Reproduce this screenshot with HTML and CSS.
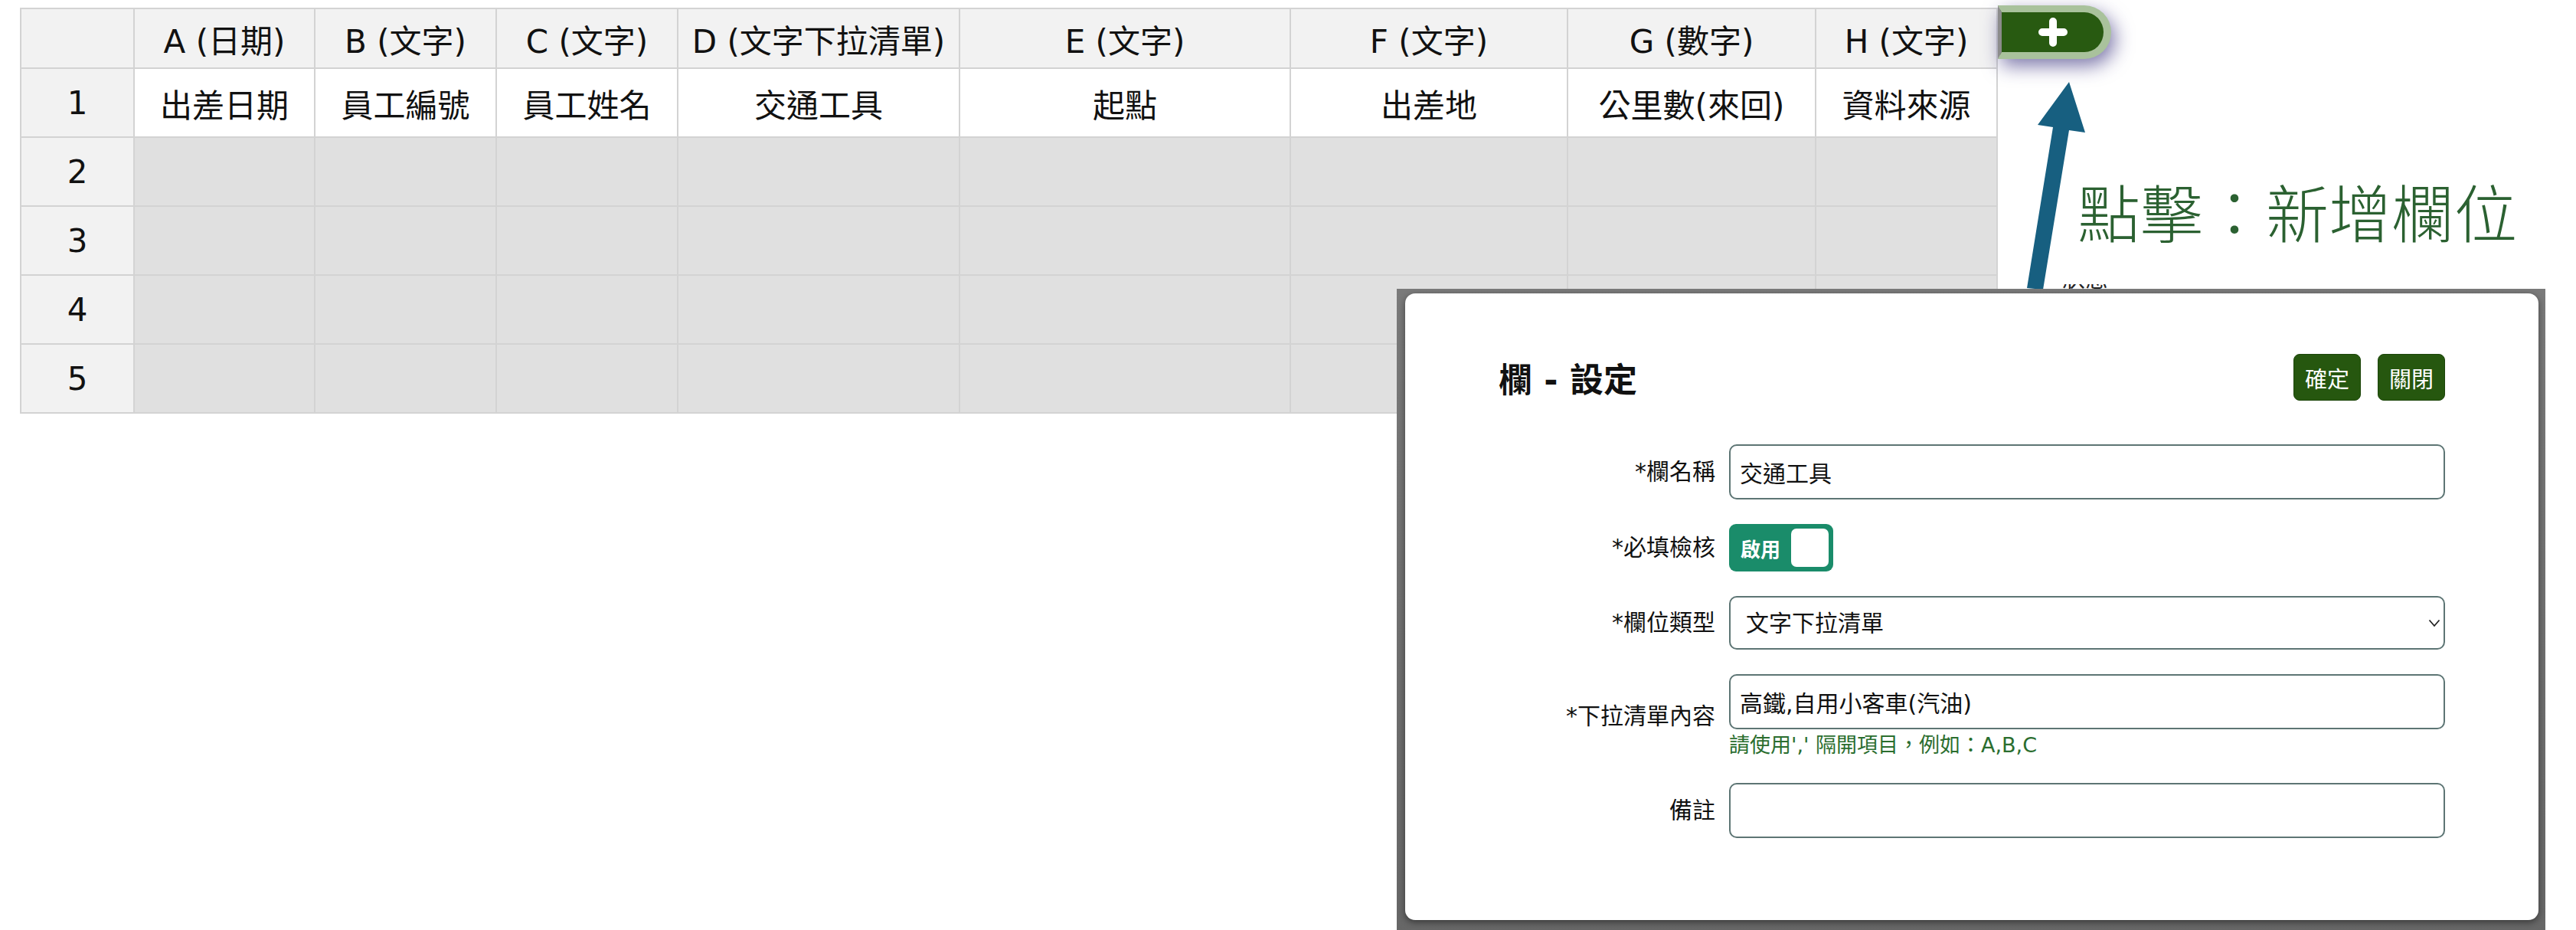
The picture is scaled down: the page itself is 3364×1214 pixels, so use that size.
FILE: index.html
```html
<!DOCTYPE html>
<html lang="zh-Hant">
<head>
  <meta charset="UTF-8" />
  <meta name="viewport" content="width=device-width, initial-scale=1.0"/>
  <title>欄位設定</title>
  <link rel="stylesheet" href="styles.css">
</head>
<body>
  <div class="sheet-area">
    <table class="sheet">
      <colgroup>
        <col style="width:148px">
        <col style="width:236px">
        <col style="width:237px">
        <col style="width:237px">
        <col style="width:368px">
        <col style="width:432px">
        <col style="width:362px">
        <col style="width:324px">
        <col style="width:237px">
      </colgroup>
      <thead>
        <tr>
          <th></th>
          <th>A (日期)</th>
          <th>B (文字)</th>
          <th>C (文字)</th>
          <th>D (文字下拉清單)</th>
          <th>E (文字)</th>
          <th>F (文字)</th>
          <th>G (數字)</th>
          <th>H (文字)</th>
        </tr>
      </thead>
      <tbody>
        <tr class="title-row">
          <th>1</th>
          <td>出差日期</td>
          <td>員工編號</td>
          <td>員工姓名</td>
          <td>交通工具</td>
          <td>起點</td>
          <td>出差地</td>
          <td>公里數(來回)</td>
          <td>資料來源</td>
        </tr>
        <tr><th>2</th><td></td><td></td><td></td><td></td><td></td><td></td><td></td><td></td></tr>
        <tr><th>3</th><td></td><td></td><td></td><td></td><td></td><td></td><td></td><td></td></tr>
        <tr><th>4</th><td></td><td></td><td></td><td></td><td></td><td></td><td></td><td></td></tr>
        <tr><th>5</th><td></td><td></td><td></td><td></td><td></td><td></td><td></td><td></td></tr>
      </tbody>
    </table>

    <button class="add-col" type="button" title="新增欄位">
      <svg width="40" height="40" viewBox="0 0 40 40">
        <path d="M20 6 V34 M6 20 H34" stroke="#fff" stroke-width="10" stroke-linecap="round" fill="none"/>
      </svg>
    </button>
  </div>

  <!-- annotation -->
  <svg class="hint-arrow" width="90" height="290" viewBox="0 0 90 290">
    <polygon points="62,7 83,73 62,70 28,278 7,276 41,66 21,63" fill="#175f80"/>
  </svg>
  <div class="hint-text">點擊：新增欄位</div>
  <div class="behind-label"><span>狀態</span></div>

  <div class="modal-frame">
    <div class="modal">
      <div class="modal-head">
        <h2>欄 - 設定</h2>
        <div class="modal-actions">
          <button type="button" class="btn">確定</button>
          <button type="button" class="btn">關閉</button>
        </div>
      </div>

      <form class="form-grid">
        <label for="col-name">*欄名稱</label>
        <div class="field">
          <input type="text" id="col-name" class="text-input" value="交通工具" />
        </div>

        <label>*必填檢核</label>
        <div class="field">
          <div class="toggle">
            <span>啟用</span>
            <span class="knob"></span>
          </div>
        </div>

        <label for="col-type">*欄位類型</label>
        <div class="field select-wrap">
          <select id="col-type" class="text-input select">
            <option>文字下拉清單</option>
          </select>
          <svg class="chevron" width="16" height="11" viewBox="0 0 16 11">
            <path d="M1.5 1.5 L8 9 L14.5 1.5" stroke="#222" stroke-width="1.8" fill="none"/>
          </svg>
        </div>

        <label for="col-options">*下拉清單內容</label>
        <div class="field">
          <input type="text" id="col-options" class="text-input" value="高鐵,自用小客車(汽油)" />
          <div class="hint">請使用',' 隔開項目，例如：A,B,C</div>
        </div>

        <label for="col-note">備註</label>
        <div class="field">
          <input type="text" id="col-note" class="text-input" value="" />
        </div>
      </form>
    </div>
  </div>
</body>
</html>
```

FILE: styles.css
```css
html, body {
  overflow: hidden;
}

body {
  margin: 0;
  padding: 0;
  background-color: #fff;
  color: #111;
  font-family: "DejaVu Sans", "Noto Sans CJK TC", sans-serif;
}

.sheet-area {
  display: flex;
  align-items: flex-start;
  padding: 10px 0 0 26px;
}

.sheet {
  border-collapse: collapse;
  table-layout: fixed;
  width: 2581px;
  font-size: 42px;
}

.sheet th, .sheet td {
  border: 2px solid #d3d3d3;
  text-align: center;
  vertical-align: middle;
  font-weight: normal;
  padding: 0;
  background-color: #e0e0e0;
}

.sheet thead tr {
  height: 78px;
}

.sheet tbody tr {
  height: 90px;
}

.sheet thead th,
.sheet tbody th {
  background-color: #f2f2f2;
}

.sheet .title-row td {
  background-color: #fff;
}

.add-col {
  margin-top: -3px;
  width: 148px;
  height: 70px;
  padding: 0;
  border-style: solid;
  border-width: 9px 10px 9px 5px;
  border-color: #a9c29c #a9c29c #a9c29c #8c8c8c;
  border-radius: 0 38px 38px 0;
  background-color: #285a11;
  box-shadow: 5px 9px 24px rgba(40, 32, 115, 0.6);
  display: flex;
  align-items: center;
  justify-content: center;
  cursor: pointer;
}

.hint-arrow {
  position: absolute;
  left: 2640px;
  top: 100px;
}

.hint-text {
  position: absolute;
  left: 2713px;
  top: 234px;
  font-family: "Noto Sans CJK TC", sans-serif;
  font-size: 82px;
  font-weight: 300;
  line-height: 1;
  color: #2b6131;
}

.behind-label {
  position: absolute;
  left: 2693px;
  top: 371px;
  height: 7px;
  overflow: hidden;
}

.behind-label span {
  display: block;
  margin-top: -22px;
  font-size: 30px;
  line-height: 1;
  color: #222;
}

/* dialog */
.modal-frame {
  position: absolute;
  left: 1824px;
  top: 377px;
  width: 1500px;
  height: 870px;
  box-sizing: border-box;
  padding: 6px 9px 0 11px;
  background: linear-gradient(#7a7a7a, #666);
  z-index: 2;
}

.modal {
  height: 818px;
  box-sizing: border-box;
  padding: 79px 122px 0 122px;
  background-color: #fff;
  border-radius: 13px;
  box-shadow: 0 3px 8px rgba(0, 0, 0, 0.45);
}

.modal-head {
  display: flex;
  align-items: center;
  justify-content: space-between;
  height: 61px;
}

.modal-head h2 {
  margin: 0;
  font-size: 44px;
  font-weight: bold;
  color: #111;
}

.modal-actions {
  display: flex;
  gap: 22px;
}

.btn {
  height: 61px;
  padding: 0 14px;
  border: 1px solid #1c450a;
  border-radius: 8px;
  background-color: #26570f;
  color: #fff;
  font-family: "Noto Sans CJK TC", sans-serif;
  font-size: 29px;
  cursor: pointer;
}

.form-grid {
  display: grid;
  grid-template-columns: 283px 1fr;
  column-gap: 18px;
  row-gap: 32px;
  align-items: center;
  margin: 57px 0 0 0;
}

.form-grid label {
  text-align: right;
  font-size: 30px;
  line-height: 1.2;
  color: #111;
}

.field {
  display: flex;
  flex-direction: column;
}

.text-input {
  height: 72px;
  box-sizing: border-box;
  padding: 0 12px;
  border: 2px solid #5d7574;
  border-radius: 10px;
  background-color: #fff;
  color: #111;
  font-family: "DejaVu Sans", "Noto Sans CJK TC", sans-serif;
  font-size: 30px;
  outline: none;
}

.select-wrap {
  position: relative;
}

.select {
  height: 70px;
  padding-left: 20px;
  -webkit-appearance: none;
  appearance: none;
}

.chevron {
  position: absolute;
  right: 6px;
  top: 30px;
}

.toggle {
  width: 136px;
  height: 62px;
  box-sizing: border-box;
  padding: 6px 6px 6px 15px;
  display: flex;
  align-items: center;
  justify-content: space-between;
  background-color: #1a8c6a;
  border-radius: 9px;
  color: #fff;
  font-family: "Noto Sans CJK TC", sans-serif;
  font-size: 26px;
  font-weight: bold;
}

.toggle .knob {
  width: 49px;
  height: 50px;
  background-color: #fff;
  border-radius: 7px;
}

.hint {
  margin-top: 4px;
  font-size: 27px;
  line-height: 34px;
  color: #2b6e2f;
}
```
